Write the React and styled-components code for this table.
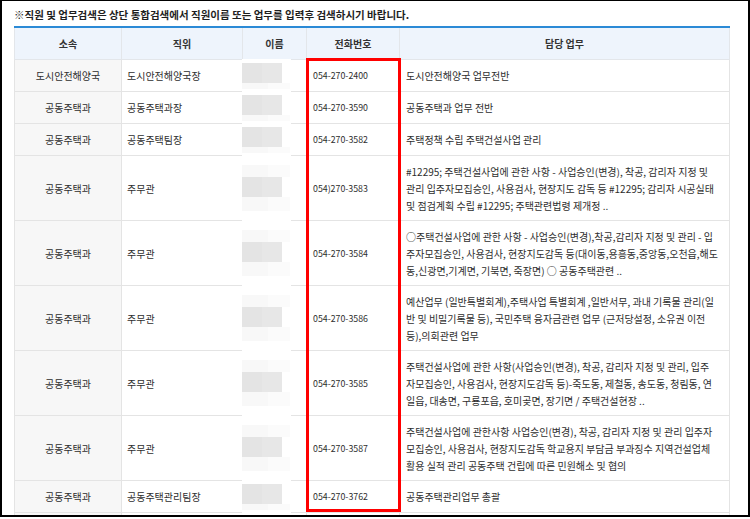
import React from 'react';
import styled, { createGlobalStyle } from 'styled-components';

const Global = createGlobalStyle`
  html, body { margin: 0; padding: 0; background: #fff; }
  body { font-family: "Noto Sans CJK KR", "Noto Sans", sans-serif; }
`;

const Frame = styled.div`
  position: relative;
  box-sizing: border-box;
  width: 750px;
  height: 517px;
  border-style: solid;
  border-color: #000;
  border-width: 1px 2px 2px 2px;
  overflow: hidden;
  background: #fff;
`;

const Notice = styled.p`
  margin: 5px 0 3px 12px;
  font-size: 10.5px;
  line-height: 17px;
  font-weight: 700;
  color: #1e1e1e;
  white-space: nowrap;
`;

const Table = styled.table`
  margin-left: 12px;
  width: 715px;
  table-layout: fixed;
  border-collapse: collapse;
  border-top: 2px solid #2b8ad6;
  font-size: 10px;
  color: #2e2e2e;
`;

const Th = styled.th`
  height: 31px;
  padding: 0;
  background: #eef4fc;
  border: 1px solid #e3e6ea;
  border-top: none;
  font-weight: 700;
  color: #333;
  text-align: center;
  vertical-align: middle;
`;

const Td = styled.td`
  padding: 6.5px ${p => (p.$center ? '0' : '6px')};
  line-height: 17px;
  height: 18px;
  border: 1px solid #e4e4e4;
  background: ${p => (p.$shade ? '#f7f7f7' : '#fff')};
  text-align: ${p => (p.$center ? 'center' : 'left')};
  vertical-align: middle;
  white-space: nowrap;
  overflow: hidden;
`;

const PosTd = styled(Td)`
  padding-left: 5px;
`;

const TelTd = styled(Td)`
  font-size: 8.8px;
  padding-left: 6px;
`;

const NameTd = styled.td`
  position: relative;
  padding: 0;
  border: 1px solid #e4e4e4;
  background: #fff;
`;

const Blur = styled.div`
  position: absolute;
  left: -1px;
  top: -1px;
  bottom: -1px;
  width: 49px;
  background: #fff;
  display: flex;
  flex-direction: column;
  justify-content: center;
  align-items: flex-start;
`;

const Smudge = styled.div`
  width: 40px;
  height: 20px;
  background: linear-gradient(to right, #e4e4e4 0 50%, #e7e7e7 50% 100%);
`;

const Haze = styled.div`
  width: 48px;
  height: ${p => p.$h}px;
  background: linear-gradient(to right, #f8f8f8 0 55%, #fbfbfb 55% 100%);
`;

const RedBox = styled.div`
  position: absolute;
  left: 304px;
  top: 57px;
  width: 95px;
  height: 454px;
  box-sizing: border-box;
  border: 3px solid #f00;
  pointer-events: none;
`;

const rows = [
  { dept: '도시안전해양국', pos: '도시안전해양국장', tel: '054-270-2400', duty: ['도시안전해양국 업무전반'] },
  { dept: '공동주택과', pos: '공동주택과장', tel: '054-270-3590', duty: ['공동주택과 업무 전반'] },
  { dept: '공동주택과', pos: '공동주택팀장', tel: '054-270-3582', duty: ['주택정책 수립 주택건설사업 관리'] },
  {
    dept: '공동주택과', pos: '주무관', tel: '054)270-3583',
    duty: [
      '#12295; 주택건설사업에 관한 사항 - 사업승인(변경), 착공, 감리자 지정 및',
      '관리 입주자모집승인, 사용검사, 현장지도 감독 등 #12295; 감리자 시공실태',
      '및 점검계획 수립 #12295; 주택관련법령 제개정 ..',
    ],
  },
  {
    dept: '공동주택과', pos: '주무관', tel: '054-270-3584',
    duty: [
      '○주택건설사업에 관한 사항 - 사업승인(변경),착공,감리자 지정 및 관리 - 입',
      '주자모집승인, 사용검사, 현장지도감독 등(대이동,용흥동,중앙동,오천읍,해도',
      '동,신광면,기계면, 기북면, 죽장면) ○ 공동주택관련 ..',
    ],
  },
  {
    dept: '공동주택과', pos: '주무관', tel: '054-270-3586',
    duty: [
      '예산업무 (일반특별회계),주택사업 특별회계 ,일반서무, 과내 기록물 관리(일',
      '반 및 비밀기록물 등), 국민주택 융자금관련 업무 (근저당설정, 소유권 이전',
      '등),의회관련 업무',
    ],
  },
  {
    dept: '공동주택과', pos: '주무관', tel: '054-270-3585',
    duty: [
      '주택건설사업에 관한 사항(사업승인(변경), 착공, 감리자 지정 및 관리, 입주',
      '자모집승인, 사용검사, 현장지도감독 등)-죽도동, 제철동, 송도동, 청림동, 연',
      '일읍, 대송면, 구룡포읍, 호미곶면, 장기면 / 주택건설현장 ..',
    ],
  },
  {
    dept: '공동주택과', pos: '주무관', tel: '054-270-3587',
    duty: [
      '주택건설사업에 관한사항 사업승인(변경), 착공, 감리자 지정 및 관리 입주자',
      '모집승인, 사용검사, 현장지도감독 학교용지 부담금 부과징수 지역건설업체',
      '활용 실적 관리 공동주택 건립에 따른 민원해소 및 협의',
    ],
  },
  { dept: '공동주택과', pos: '공동주택관리팀장', tel: '054-270-3762', duty: ['공동주택관리업무 총괄'] },
  { dept: '', pos: '', tel: '', duty: [''] },
];

function Duty({ lines }) {
  return lines.map((l, i) => (
    <React.Fragment key={i}>
      {i > 0 && <br />}
      {l}
    </React.Fragment>
  ));
}

export default function App() {
  return (
    <>
      <Global />
      <Frame>
        <Notice>※직원 및 업무검색은 상단 통합검색에서 직원이름 또는 업무를 입력후 검색하시기 바랍니다.</Notice>
        <Table>
          <colgroup>
            <col style={{ width: 107 }} />
            <col style={{ width: 121 }} />
            <col style={{ width: 64 }} />
            <col style={{ width: 93 }} />
            <col style={{ width: 330 }} />
          </colgroup>
          <thead>
            <tr>
              <Th>소속</Th>
              <Th>직위</Th>
              <Th>이름</Th>
              <Th>전화번호</Th>
              <Th>담당 업무</Th>
            </tr>
          </thead>
          <tbody>
            {rows.map((r, i) => {
              const tall = r.duty.length > 1;
              return (
                <tr key={i}>
                  <Td $shade $center>{r.dept}</Td>
                  <PosTd>{r.pos}</PosTd>
                  <NameTd>
                    <Blur>
                      {tall && <Haze $h={12} />}
                      <Smudge />
                      <Haze $h={tall ? 14 : 6} />
                    </Blur>
                  </NameTd>
                  <TelTd>{r.tel}</TelTd>
                  <Td>
                    <Duty lines={r.duty} />
                  </Td>
                </tr>
              );
            })}
          </tbody>
        </Table>
        <RedBox />
      </Frame>
    </>
  );
}
